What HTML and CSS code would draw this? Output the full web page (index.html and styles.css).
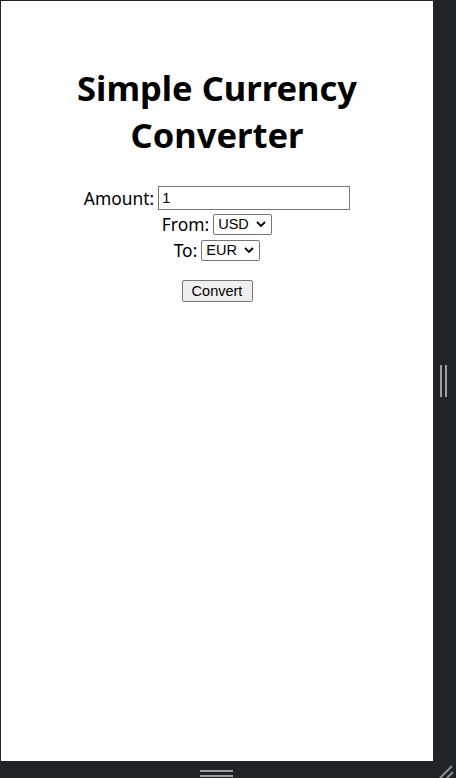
FILE: index.html
```html
<!DOCTYPE html>
<html>
<head>
<meta charset="utf-8">
<link rel="stylesheet" href="styles.css">
</head>
<body>
<div class="frame">
  <main class="viewport">
    <div class="app">
      <h1 class="title">Simple Currency Converter</h1>
      <div class="row"><label class="label" for="amt">Amount:</label><input id="amt" class="amount" type="text" value="1"></div>
      <div class="row"><label class="label" for="from">From:</label><select id="from" class="pick"><option>USD</option><option>EUR</option></select></div>
      <div class="row"><label class="label" for="to">To:</label><select id="to" class="pick"><option>EUR</option><option>USD</option></select></div>
      <button class="convert" type="button">Convert</button>
    </div>
  </main>
  <div class="handle-right"><span></span><span></span></div>
  <div class="handle-bottom"><span></span><span></span></div>
  <svg class="handle-corner" width="16" height="16" viewBox="0 0 16 16"><path d="M2 16 L14 4 M9 16 L15 10" stroke="#8b9096" stroke-width="2" fill="none"/></svg>
</div>
</body>
</html>
```
FILE: styles.css
```css
html, body {
  margin: 0;
  padding: 0;
}
body {
  background: #202428;
  width: 456px;
  height: 778px;
  overflow: hidden;
}
.frame {
  position: relative;
  width: 456px;
  height: 778px;
  padding: 1px 23px 17px 1px;
  box-sizing: border-box;
}
.viewport {
  display: block;
  background: #fff;
  width: 432px;
  height: 760px;
  padding: 8px;
  box-sizing: border-box;
}
.app {
  display: flex;
  flex-direction: column;
  align-items: center;
  font-family: "Noto Sans", "Open Sans", sans-serif;
  color: #000;
}
.title {
  font-size: 34.5px;
  font-weight: 700;
  line-height: 47px;
  text-align: center;
  margin: 55px 0 28px;
}
.row {
  display: flex;
  align-items: center;
  gap: 4px;
  font-size: 17.4px;
  margin-bottom: 2px;
}
.label {
  line-height: 24px;
}
.amount {
  width: 192px;
  height: 24px;
  box-sizing: border-box;
  border: 1px solid #767676;
  padding: 1px 3px;
  font: 14.5px "Liberation Sans", Arial, sans-serif;
  margin: 0;
}
.pick {
  -webkit-appearance: none;
  appearance: none;
  width: 59px;
  height: 21px;
  box-sizing: border-box;
  font: 14.5px "Liberation Sans", Arial, sans-serif;
  border: 1px solid #767676;
  border-radius: 2px;
  padding: 0 0 0 4px;
  background: #fff url("data:image/svg+xml;utf8,<svg xmlns='http://www.w3.org/2000/svg' width='10' height='6' viewBox='0 0 10 6'><path d='M1 1 L5 5 L9 1' stroke='black' stroke-width='1.8' fill='none'/></svg>") no-repeat right 5px center;
  color: #000;
  margin: 0;
}
.convert {
  margin-top: 16px;
  width: 71px;
  height: 22px;
  box-sizing: border-box;
  font: 14.5px "Liberation Sans", Arial, sans-serif;
  background: #efefef;
  border: 1px solid #767676;
  border-radius: 2px;
  padding: 0 4px;
  color: #000;
}
.handle-right {
  position: absolute;
  left: 440px;
  top: 365px;
  display: flex;
  gap: 3px;
}
.handle-right span {
  display: block;
  width: 2px;
  height: 32px;
  background: #9aa0a6;
}
.handle-bottom {
  position: absolute;
  left: 200px;
  top: 770px;
  display: flex;
  flex-direction: column;
  gap: 3px;
}
.handle-bottom span {
  display: block;
  width: 33px;
  height: 2px;
  background: #9aa0a6;
}
.handle-corner {
  position: absolute;
  left: 438px;
  top: 762px;
}
```
